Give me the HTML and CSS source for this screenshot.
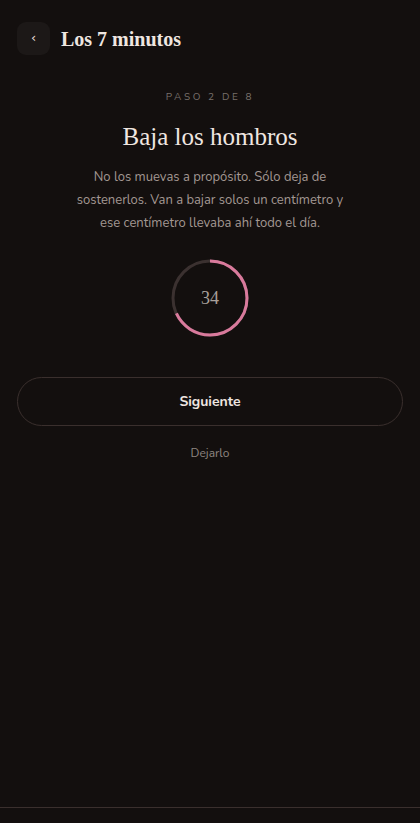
FILE: index.html
```html
<!DOCTYPE html>
<html lang="es">
<head>
  <meta charset="UTF-8">
  <meta name="viewport" content="width=device-width, initial-scale=1.0">
  <title>Los 7 minutos</title>
  <link rel="stylesheet" href="styles.css">
</head>
<body>
  <div class="app">
    <header class="topbar">
      <button class="back-btn" aria-label="Volver">&lsaquo;</button>
      <h1>Los 7 minutos</h1>
    </header>

    <main class="step">
      <p class="step-count">PASO 2 DE 8</p>
      <h2>Baja los hombros</h2>
      <p class="step-text">No los muevas a propósito. Sólo deja de sostenerlos. Van a bajar solos un centímetro y ese centímetro llevaba ahí todo el día.</p>

      <div class="timer">
        <svg width="78" height="78" viewBox="0 0 78 78">
          <circle class="track" cx="39" cy="39" r="37"></circle>
          <circle class="progress" cx="39" cy="39" r="37" stroke-dasharray="158.1 232.5" transform="rotate(-90 39 39)"></circle>
        </svg>
        <span class="timer-num">34</span>
      </div>

      <button class="next-btn">Siguiente</button>
      <button class="quit-btn">Dejarlo</button>
    </main>

    <footer class="bottom"></footer>
  </div>
</body>
</html>
```

FILE: styles.css
```css
* {
  box-sizing: border-box;
}

html, body {
  margin: 0;
  height: 100%;
  background: #130f0e;
}

body {
  font-family: "Nunito", "Lato", "Noto Sans", sans-serif;
  color: #ece3dd;
}

.app {
  min-height: 100%;
  display: flex;
  flex-direction: column;
}

.topbar {
  display: flex;
  align-items: center;
  gap: 11px;
  padding: 22px 17px 0;
}

.back-btn {
  width: 33px;
  height: 33px;
  border: 0;
  border-radius: 9px;
  background: #1c1817;
  color: #e6ddd6;
  font-family: "DejaVu Sans", sans-serif;
  font-size: 13px;
  line-height: 1;
  padding: 0 0 2px;
}

.topbar h1 {
  margin: 2px 0 0;
  font-family: "Liberation Serif", serif;
  font-size: 20px;
  font-weight: bold;
  color: #efe6e0;
}

.step {
  flex: 1;
  display: flex;
  flex-direction: column;
  align-items: center;
  padding: 0 17px;
  text-align: center;
}

.step-count {
  margin: 35px 0 0;
  font-size: 10px;
  letter-spacing: 2.6px;
  color: #786f6b;
}

.step h2 {
  margin: 19px 0 0;
  font-family: "Liberation Serif", serif;
  font-size: 25px;
  font-weight: normal;
  color: #efe6e0;
}

.step-text {
  margin: 15px 0 0;
  max-width: 280px;
  font-size: 13px;
  line-height: 23px;
  color: #a39893;
}

.timer {
  position: relative;
  width: 78px;
  height: 78px;
  margin-top: 24px;
}

.timer svg {
  display: block;
}

.timer circle {
  fill: none;
  stroke-width: 3;
}

.timer .track {
  stroke: #3b3130;
}

.timer .progress {
  stroke: #d97a9c;
}

.timer-num {
  position: absolute;
  inset: 0;
  display: flex;
  align-items: center;
  justify-content: center;
  font-family: "Liberation Serif", serif;
  font-size: 18px;
  color: #a9a09b;
}

.next-btn {
  width: 100%;
  height: 49px;
  margin-top: 40px;
  border: 1px solid #3a2f2d;
  border-radius: 25px;
  background: transparent;
  color: #efe6e0;
  font-family: inherit;
  font-size: 14px;
  font-weight: bold;
}

.quit-btn {
  margin-top: 18px;
  border: 0;
  background: none;
  color: #8f8681;
  font-family: inherit;
  font-size: 12px;
}

.bottom {
  height: 16px;
  border-top: 1px solid #3a2f2d;
}
```
